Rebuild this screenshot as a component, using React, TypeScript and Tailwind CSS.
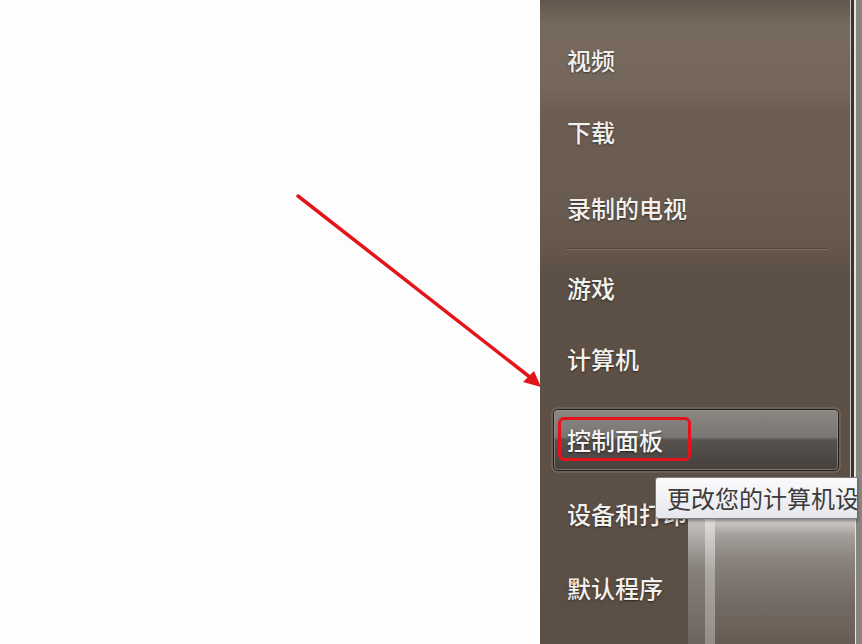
import React from 'react';

// Start-menu style right column with an annotation arrow pointing at 控制面板

const font = 'font-["Noto_Sans_CJK_SC","Noto_Sans",sans-serif]';

const MenuItem: React.FC<{ label: string; h: string }> = ({ label, h }) => (
    <div className={`${h} flex items-center pl-[27px] text-[24px] font-medium text-[#f3f1ee] [text-shadow:0_1px_2px_rgba(0,0,0,0.55)]`}>
        {label}
    </div>
);

export default function App() {
    return (
        <div className={`w-[862px] h-[644px] flex overflow-hidden bg-white ${font}`}>
            {/* white area with the red arrow */}
            <div className="relative w-[540px] h-full bg-[#fdfdfd]">
                <svg className="absolute inset-0" width="540" height="644" viewBox="0 0 540 644">
                    <line x1="298" y1="196" x2="531" y2="378" stroke="#e3151b" strokeWidth="3.5" strokeLinecap="round" />
                    <polygon points="541,387 523,382 534,371" fill="#e3151b" />
                </svg>
            </div>

            {/* menu column */}
            <div className="relative flex-1 h-full flex bg-[linear-gradient(180deg,#776a5f_0%,#75675b_14%,#6c5e53_17%,#6a5c51_30%,#66584d_38%,#5c4f45_43%,#5d5046_60%,#5b4e44_100%)]">
                <div className="flex-1 flex flex-col">
                    <div className="h-[24px] bg-[linear-gradient(180deg,rgba(60,50,42,0.35),rgba(60,50,42,0))]" />
                    <MenuItem label="视频" h="h-[72px]" />
                    <MenuItem label="下载" h="h-[72px]" />
                    <MenuItem label="录制的电视" h="h-[80px]" />
                    <div className="ml-[26px] mr-[22px] h-[2px] border-t border-[#54483e] bg-[#7c6e62]" />
                    <MenuItem label="游戏" h="h-[76px]" />
                    <MenuItem label="计算机" h="h-[66px]" />

                    <div className="pt-[17px] pl-[13px] pr-[11px]">
                        <div className="relative h-[62px] rounded-[5px] border border-[#241e1a] shadow-[0_0_0_2px_rgba(140,128,118,0.35)] bg-[linear-gradient(180deg,#8a8682_0%,#7a7673_45%,#57524e_50%,#45403c_100%)]">
                            <div className="absolute inset-0 rounded-[4px] border border-[#a19c97]/60" />
                            <div className="relative h-full flex items-center pl-[13px] text-[24px] font-medium text-[#f5f4f2] [text-shadow:0_1px_2px_rgba(0,0,0,0.6)]">
                                控制面板
                            </div>
                            <div className="absolute left-[4px] top-[7px] w-[133px] h-[44px] rounded-[6px] border-[3px] border-[#e5121c]" />
                        </div>
                    </div>

                    <MenuItem label="设备和打印机" h="h-[86px]" />
                    <MenuItem label="默认程序" h="h-[62px]" />
                </div>

                {/* right edge of the menu */}
                <div className="w-[1px] bg-[#cfc9c3]" />
                <div className="w-[3px] bg-[#3a332e]" />
                <div className="w-[2px] bg-[#e6e4e2]" />
                <div className="w-[6px] bg-[#8a847f]" />

                {/* ghost of the flyout under the tooltip */}
                <div className="absolute left-[148px] top-[518px] w-[167px] h-[126px] flex bg-[linear-gradient(180deg,#d6d4d2_0%,#a29e9a_14%,#878079_36%,#736a63_68%,#665c54_100%)]">
                    <div className="w-[17px] h-full bg-[linear-gradient(180deg,#c9c6c3,#86807a_40%,#6c635c)]" />
                    <div className="w-[10px] h-full bg-[linear-gradient(180deg,#e2e1e0,#a9a5a1_45%,#938d88)]" />
                </div>

                {/* tooltip */}
                <div className="absolute left-[115px] top-[477px] w-[202px] h-[42px] flex items-center pl-[11px] whitespace-nowrap rounded-l-[3px] border border-r-0 border-[#7d7d7d] bg-[linear-gradient(180deg,#fbfbfc,#e6e7ec)] shadow-[1px_2px_3px_rgba(0,0,0,0.35)] text-[24px] text-[#3b3b3b] overflow-hidden">
                    更改您的计算机设置
                </div>
            </div>
        </div>
    );
}
